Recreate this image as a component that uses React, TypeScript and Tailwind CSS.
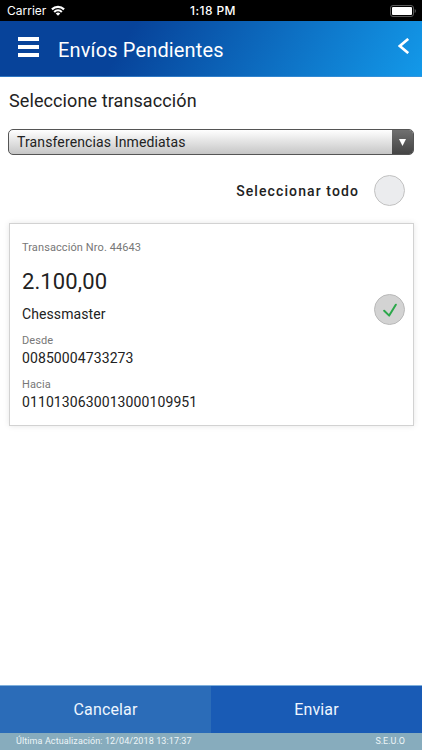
import React from 'react';

type Field = { label: string; value: string };

const FIELDS: Field[] = [
  { label: 'Desde', value: '00850004733273' },
  { label: 'Hacia', value: '0110130630013000109951' },
];

function StatusBar() {
  return (
    <div className="grid h-[21px] grid-cols-3 items-center bg-black pr-[6px] pl-[7px] text-white font-['Inter',sans-serif]">
      <div className="flex items-center gap-[5px]">
        <span className="text-[12px] leading-[21px]">Carrier</span>
        <svg width="14" height="11" viewBox="0 0 15 11" fill="none" stroke="currentColor" strokeWidth="2.3">
          <path d="M1 4.3a9.3 9.3 0 0 1 13 0" />
          <path d="M3.4 7a5.9 5.9 0 0 1 8.2 0" />
          <path d="M7.5 11 5.1 8.8a3.5 3.5 0 0 1 4.8 0z" fill="currentColor" stroke="none" />
        </svg>
      </div>
      <span className="pl-[3px] text-center text-[12px] leading-[21px] font-medium tracking-[0.4px]">1:18 PM</span>
      <svg className="justify-self-end" width="26" height="12" viewBox="0 0 26 12">
        <rect x="0.5" y="0.5" width="23" height="11" rx="2.5" fill="none" stroke="#5b5b5b" />
        <rect x="2" y="2" width="20" height="8" rx="1" fill="#fff" />
        <path d="M24.7 4v4q1.2-.6 1.2-2t-1.2-2z" fill="#5b5b5b" />
      </svg>
    </div>
  );
}

function Header() {
  return (
    <header className="flex h-14 items-center border-b border-[#4a9ade]/60 bg-[linear-gradient(120deg,#07439a_0%,#07439a_30%,#1399e9_100%)] pr-[13px] pl-[18px] text-white">
      <button className="mt-[-3px] flex w-[21px] flex-col gap-1" aria-label="Menú">
        <span className="h-1 w-full bg-white" />
        <span className="h-1 w-full bg-white" />
        <span className="h-1 w-full bg-white" />
      </button>
      <h1 className="ml-[19px] flex-1 pt-[2px] text-[20px] leading-6 tracking-[0.15px] whitespace-nowrap">Envíos Pendientes</h1>
      <button className="-mt-[5px]" aria-label="Volver">
        <svg width="11" height="16" viewBox="0 0 11 16" fill="none" stroke="currentColor" strokeWidth="2.6">
          <path d="M10.2 .9 1.8 8l8.4 7.1" />
        </svg>
      </button>
    </header>
  );
}

function TransactionCard() {
  return (
    <section className="mt-[17px] mr-2 ml-[9px] flex h-[203px] items-center justify-between border border-[#d2d2d2] bg-white pr-2 pl-3 shadow-[0_0_6px_rgba(0,0,0,0.1)]">
      <div className="flex h-full flex-col whitespace-nowrap">
        <p className="mt-[17px] text-[11px] leading-[14px] tracking-[0.1px] text-[#777]">Transacción Nro. 44643</p>
        <p className="mt-[13px] text-[22px] leading-7 tracking-[0.1px]">2.100,00</p>
        <p className="mt-[9px] text-[14px] leading-[18px] tracking-[0.1px]">Chessmaster</p>
        {FIELDS.map((field) => (
          <div key={field.label} className="mt-[11px] h-[33px]">
            <p className="text-[11px] leading-[14px] tracking-[0.1px] text-[#777]">{field.label}</p>
            <p className="mt-px text-[14px] leading-[18px] tracking-[0.1px]">{field.value}</p>
          </div>
        ))}
      </div>
      <span className="mt-[-30px] flex size-[31px] items-center justify-center rounded-full border border-[#b9b9b9] bg-[#d3d3d3]">
        <svg width="14" height="14" viewBox="0 0 14 14" fill="none" stroke="#2ba84a" strokeWidth="2" strokeLinecap="round" strokeLinejoin="round">
          <path d="m1.2 7.8 5 4.8L12.8 1.7" />
        </svg>
      </span>
    </section>
  );
}

export default function App() {
  return (
    <div className="flex h-[750px] w-[422px] flex-col overflow-hidden bg-white text-[#222] font-['Roboto',sans-serif]">
      <StatusBar />
      <Header />
      <main className="flex-1">
        <h2 className="mt-3 ml-[9px] text-[18px] leading-6 tracking-[0.1px]">Seleccione transacción</h2>
        <div className="mx-2 mt-4 flex h-[26px] overflow-hidden rounded-[5px] border border-[#555] bg-linear-to-b from-white to-[#c6c6c6]">
          <span className="flex-1 pl-2 text-[14px] leading-6 tracking-[0.13px]">Transferencias Inmediatas</span>
          <span className="flex w-[21px] items-center justify-center bg-linear-to-b from-[#707070] to-[#444]">
            <svg width="7" height="7" viewBox="0 0 7 7" fill="#fff">
              <path d="M0 0h7L3.5 7z" />
            </svg>
          </span>
        </div>
        <div className="mt-5 flex items-center justify-end gap-[15px] pr-[17px]">
          <span className="text-[14px] leading-5 font-medium tracking-[1.1px]">Seleccionar todo</span>
          <span className="size-[31px] rounded-full border border-[#c2c2c2] bg-[#ebecee]" />
        </div>
        <TransactionCard />
      </main>
      <div className="grid h-12 grid-cols-2 border-t border-[#7fb0dc] text-[16px] text-[#eef6ff]">
        <button className="bg-[#2b6cb8] tracking-[0.15px]">Cancelar</button>
        <button className="bg-[#195bb5] tracking-[0.15px]">Enviar</button>
      </div>
      <footer className="flex h-[17px] justify-between bg-[#87acbd] pr-[17px] pl-[16px] text-[9px] leading-[17px] text-[#edf5f8]">
        <span className="tracking-[0.1px]">Última Actualización: 12/04/2018 13:17:37</span>
        <span>S.E.U.O</span>
      </footer>
    </div>
  );
}
